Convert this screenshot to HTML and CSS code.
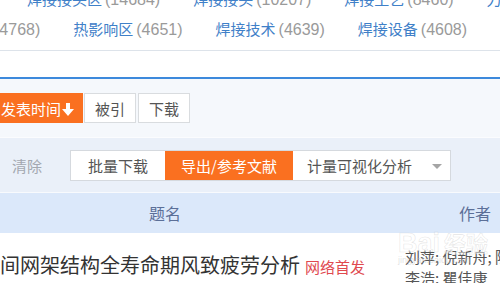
FILE: index.html
```html
<!DOCTYPE html>
<html lang="zh-CN">
<head>
<meta charset="utf-8">
<title>检索结果</title>
<link rel="stylesheet" href="styles.css">
</head>
<body>
<div class="page">
  <div class="kw">
    <div class="kw-row kw-row1">
      <a class="kw-item"><span class="kw-name">焊接接头区</span><span class="kw-count">(14684)</span></a>
      <a class="kw-item"><span class="kw-name">焊接接头</span><span class="kw-count">(10207)</span></a>
      <a class="kw-item"><span class="kw-name">焊接工艺</span><span class="kw-count">(8460)</span></a>
      <a class="kw-item"><span class="kw-name">力学性能</span><span class="kw-count">(8012)</span></a>
    </div>
    <div class="kw-row kw-row2">
      <a class="kw-item"><span class="kw-name">焊接质量</span><span class="kw-count">(4768)</span></a>
      <a class="kw-item"><span class="kw-name">热影响区</span><span class="kw-count">(4651)</span></a>
      <a class="kw-item"><span class="kw-name">焊接技术</span><span class="kw-count">(4639)</span></a>
      <a class="kw-item"><span class="kw-name">焊接设备</span><span class="kw-count">(4608)</span></a>
      <a class="kw-item"><span class="kw-name">明弧焊接</span><span class="kw-count">(4520)</span></a>
    </div>
  </div>
  <div class="tabbar"></div>
  <div class="sort">
    <span class="sort-btn active">发表时间<svg class="arrow" viewBox="0 0 12 13" width="12" height="13"><path d="M4 0h4v6h4L6 13 0 6h4z" fill="#fff"/></svg></span>
    <span class="sort-btn">被引</span>
    <span class="sort-btn">下载</span>
  </div>
  <div class="tools">
    <span class="clear">清除</span>
    <div class="tool-group">
      <span class="tool-btn">批量下载</span>
      <span class="tool-btn primary">导出/参考文献</span>
      <span class="tool-btn drop">计量可视化分析<i class="caret"></i></span>
    </div>
  </div>
  <div class="table">
    <div class="thead">
      <div class="th th-title">题名</div>
      <div class="th th-author">作者</div>
    </div>
    <div class="trow">
      <div class="td td-title"><span class="title-text">空间网架结构全寿命期风致疲劳分析</span><span class="badge">网络首发</span></div>
      <div class="td td-author">刘萍; 倪新舟; 陈伟;<br>李浩; 瞿佳康</div>
    </div>
  </div>
  <div class="watermark" aria-hidden="true">
    <span class="wm-big">Bai<span class="wm-cn">经验</span></span>
    <span class="wm-small">jingyan.baidu.com</span>
  </div>
</div>
</body>
</html>
```
FILE: styles.css
```css
* { box-sizing: border-box; margin: 0; padding: 0; }
html, body { width: 500px; height: 283px; overflow: hidden; background: #fff; }
body { font-family: "Noto Sans CJK SC", "Liberation Sans", sans-serif; color: #333; }
.page { position: relative; width: 500px; height: 283px; overflow: hidden; }

.kw { height: 51px; overflow: hidden; border-bottom: 1px solid #dde3ea; background: #fff; }
.kw-row { display: flex; gap: 33px; height: 30px; align-items: center; white-space: nowrap; }
.kw-row1 { margin-top: -16px; margin-left: 27px; }
.kw-row2 { margin-left: -69px; }
.kw-item { display: flex; align-items: baseline; flex: none; }
.kw-name { font-size: 15px; color: #3f80c8; line-height: 20px; }
.kw-count { font-family: "Liberation Sans", Arial, sans-serif; font-size: 16px; color: #9a9a9a; margin-left: 3px; line-height: 20px; }

.tabbar { height: 28px; background: #fff; border-bottom: 2px solid #3d89dc; }

.sort { display: flex; gap: 1px; padding: 14px 0 14px; margin-left: -6px; background: #f5f8fc; height: 58px; }
.sort-btn { display: flex; align-items: center; height: 30px; padding: 0 10px; font-size: 15px; color: #555; background: #fff; border: 1px solid #d9dcdf; }
.sort-btn + .sort-btn + .sort-btn { margin-left: 1px; }
.sort-btn.active { background: #fa7020; border-color: #fa7020; color: #fff; padding: 0 8px 0 6px; }
.sort-btn .arrow { margin-left: 1px; margin-top: 3px; }

.tools { display: flex; align-items: center; height: 56px; background: #eaf0f9; border-top: 1px solid #fbfcfe; border-bottom: 1px solid #f8fafd; padding-left: 12px; }
.clear { font-size: 15px; color: #a3a8b0; width: 58px; }
.tool-group { display: flex; border: 1px solid #d5d9de; height: 31px; }
.tool-btn { display: flex; align-items: center; font-size: 15px; color: #555; background: #fff; padding: 0 17px; }
.tool-btn.primary { background: #fa7020; color: #fff; padding: 0 16px; }
.tool-btn.drop { padding: 0 8px 0 14px; }
.caret { display: inline-block; width: 0; height: 0; border-left: 5px solid transparent; border-right: 5px solid transparent; border-top: 5px solid #a5a5a5; margin-left: 20px; margin-top: 2px; }

.table { margin-left: -70px; }
.thead { display: grid; grid-template-columns: 470px 150px; height: 40px; background: #dbe8fa; align-items: center; }
.th { font-size: 16px; color: #5b6f98; text-align: center; line-height: 22px; }
.trow { display: grid; grid-template-columns: 475px 150px; background: #fff; padding-top: 13px; }
.td-title { padding-left: 50px; padding-top: 5px; white-space: nowrap; display: flex; align-items: baseline; }
.title-text { font-size: 20px; color: #333; line-height: 28px; }
.badge { font-size: 15px; color: #e04a4f; margin-left: 5px; }
.td-author { font-size: 15px; line-height: 21px; color: #555; white-space: nowrap; }

.watermark { position: absolute; left: 398px; top: 228px; display: flex; flex-direction: column; pointer-events: none; }
.wm-big { font-family: "Liberation Sans", sans-serif; font-size: 27px; font-weight: 700; color: rgba(255,255,255,0.5); -webkit-text-stroke: 0.6px rgba(170,170,170,0.3); line-height: 28px; }
.wm-cn { font-family: "Noto Sans CJK SC", sans-serif; font-size: 22px; margin-left: 4px; }
.wm-small { font-family: "Liberation Sans", sans-serif; font-size: 9px; color: rgba(190,190,190,0.45); margin-top: -2px; }
```
